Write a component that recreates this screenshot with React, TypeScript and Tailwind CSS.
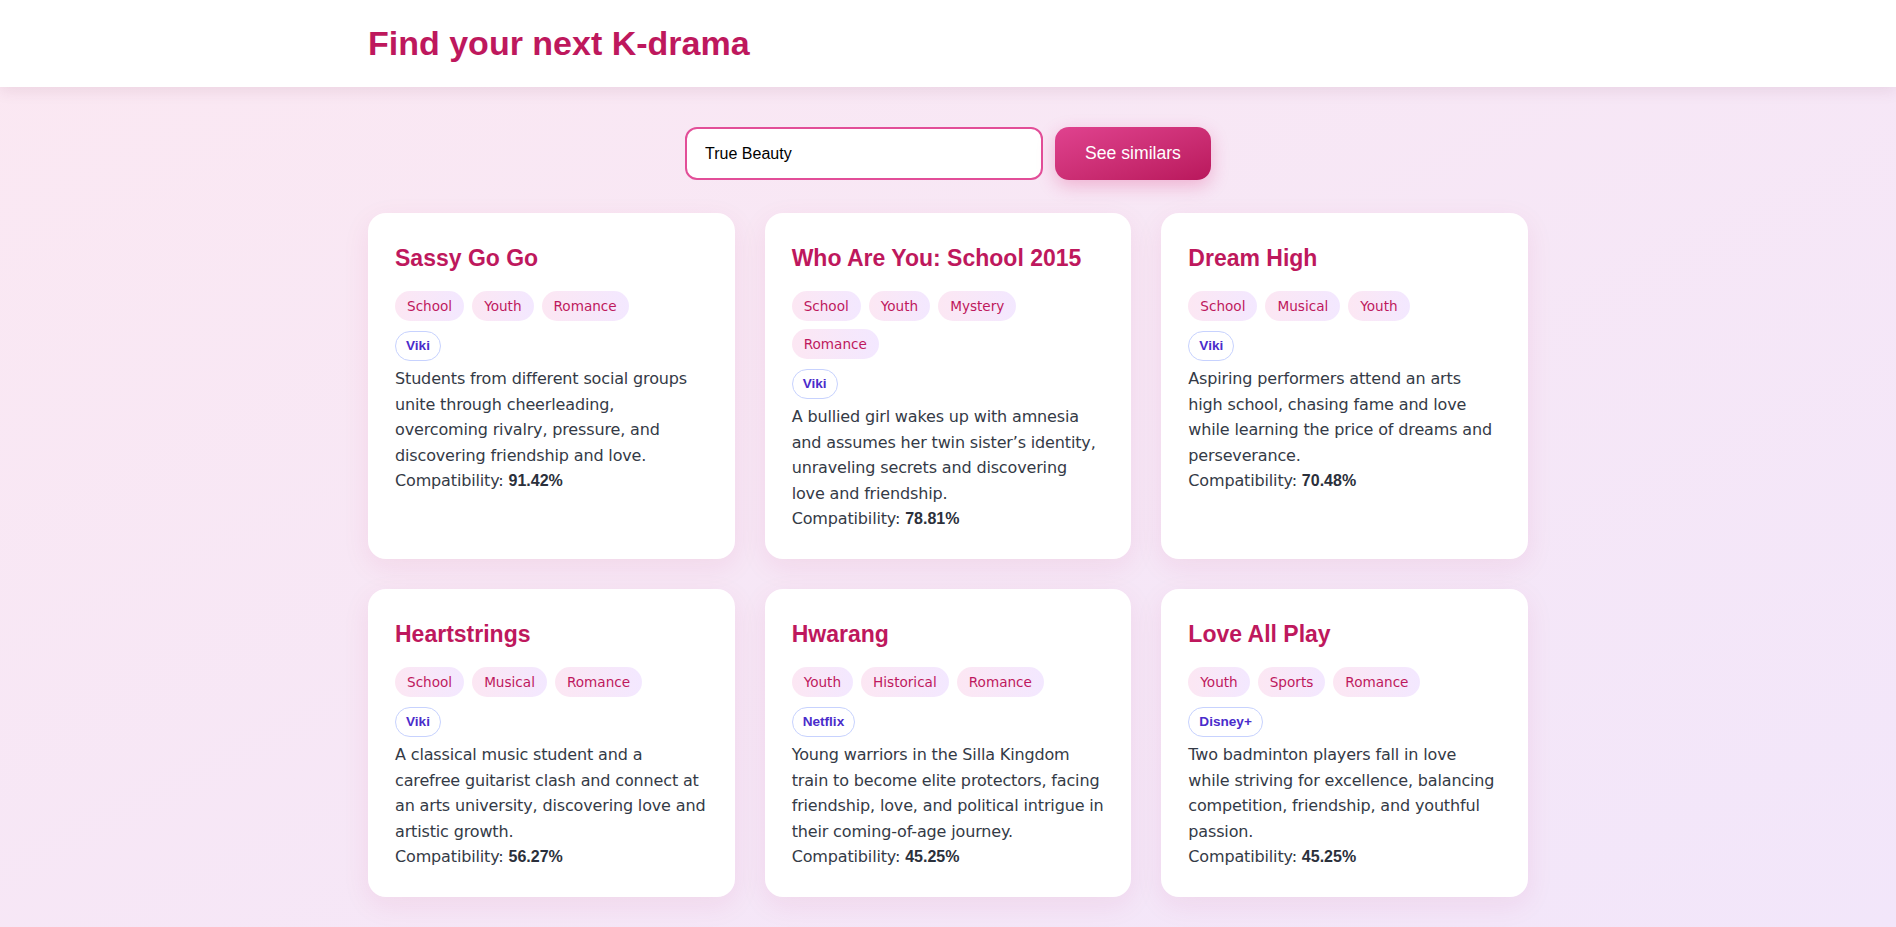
import { useState } from "react";

type Drama = {
  title: string;
  genres: string[];
  platform: string;
  description: string;
  score: string;
};

const results: Drama[] = [
  {
    title: "Sassy Go Go",
    genres: ["School", "Youth", "Romance"],
    platform: "Viki",
    description:
      "Students from different social groups unite through cheerleading, overcoming rivalry, pressure, and discovering friendship and love.",
    score: "91.42%",
  },
  {
    title: "Who Are You: School 2015",
    genres: ["School", "Youth", "Mystery", "Romance"],
    platform: "Viki",
    description:
      "A bullied girl wakes up with amnesia and assumes her twin sister\u2019s identity, unraveling secrets and discovering love and friendship.",
    score: "78.81%",
  },
  {
    title: "Dream High",
    genres: ["School", "Musical", "Youth"],
    platform: "Viki",
    // keep "high school" together on one line
    description:
      "Aspiring performers attend an arts high\u00a0school, chasing fame and love while learning the price of dreams and perseverance.",
    score: "70.48%",
  },
  {
    title: "Heartstrings",
    genres: ["School", "Musical", "Romance"],
    platform: "Viki",
    description:
      "A classical music student and a carefree guitarist clash and connect at an arts university, discovering love and artistic growth.",
    score: "56.27%",
  },
  {
    title: "Hwarang",
    genres: ["Youth", "Historical", "Romance"],
    platform: "Netflix",
    description:
      "Young warriors in the Silla Kingdom train to become elite protectors, facing friendship, love, and political intrigue in their coming-of-age journey.",
    score: "45.25%",
  },
  {
    title: "Love All Play",
    genres: ["Youth", "Sports", "Romance"],
    platform: "Disney+",
    description:
      "Two badminton players fall in love while striving for excellence, balancing competition, friendship, and youthful passion.",
    score: "45.25%",
  },
];

function DramaCard({ drama }: { drama: Drama }) {
  return (
    <div className="bg-white rounded-[18px] p-[27px] shadow-[0_8px_28px_rgba(190,24,93,0.08)]">
      <h2 className="font-['Liberation_Sans',sans-serif] font-bold text-[23px] leading-[36px] text-[#be185d]">
        {drama.title}
      </h2>
      <div className="mt-[15px] flex flex-wrap gap-2">
        {drama.genres.map((g) => (
          <span
            key={g}
            className="h-[30px] leading-[30px] px-3 rounded-full text-[13.6px] text-[#be185d] bg-gradient-to-r from-[#fce7f3] to-[#f3e8ff]"
          >
            {g}
          </span>
        ))}
      </div>
      <div className="mt-[10px] flex">
        <span className="h-[30px] leading-[28px] px-[10px] rounded-full border border-[#c7d2fe] bg-white font-['Liberation_Sans',sans-serif] font-bold text-[13.6px] text-[#4a2ccb]">
          {drama.platform}
        </span>
      </div>
      {/* DejaVu runs a hair wider than the original face, tighten to keep the same wraps */}
      <p className="mt-[5px] text-base leading-[25.6px] tracking-[-0.15px] text-[#343a46]">
        {drama.description}
      </p>
      <p className="text-base leading-[25.6px] tracking-[-0.15px] text-[#343a46]">
        Compatibility:{" "}
        <strong className="font-['Liberation_Sans',sans-serif] font-bold tracking-normal text-[#2b303b]">
          {drama.score}
        </strong>
      </p>
    </div>
  );
}

export default function App() {
  const [query, setQuery] = useState("True Beauty");

  return (
    <div className="min-h-screen bg-gradient-to-br from-[#fbe8f2] to-[#f2e6fa] font-['DejaVu_Sans',sans-serif]">
      <header className="relative z-10 h-[87px] bg-white shadow-[0_4px_14px_rgba(120,40,80,0.10)]">
        <div className="max-w-[1160px] mx-auto h-full flex items-center">
          <h1 className="font-['Liberation_Sans',sans-serif] font-bold text-[34px] text-[#be185d]">
            Find your next K-drama
          </h1>
        </div>
      </header>

      <main className="max-w-[1160px] mx-auto pt-10 pb-8">
        <form
          className="flex justify-center gap-3"
          onSubmit={(e) => e.preventDefault()}
        >
          <input
            value={query}
            onChange={(e) => setQuery(e.target.value)}
            className="w-[358px] h-[53px] px-[18px] rounded-xl border-2 border-[#e24e98] bg-white text-base text-black font-['Liberation_Sans',sans-serif] outline-none"
          />
          <button
            type="submit"
            className="h-[53px] px-[30px] rounded-[14px] bg-gradient-to-br from-[#e0428f] to-[#b9175c] text-white text-[17.6px] font-['Liberation_Sans',sans-serif] shadow-[0_6px_18px_rgba(219,39,119,0.28)]"
          >
            See similars
          </button>
        </form>

        <div className="mt-[33px] grid grid-cols-3 gap-[30px]">
          {results.map((d) => (
            <DramaCard key={d.title} drama={d} />
          ))}
        </div>
      </main>
    </div>
  );
}
